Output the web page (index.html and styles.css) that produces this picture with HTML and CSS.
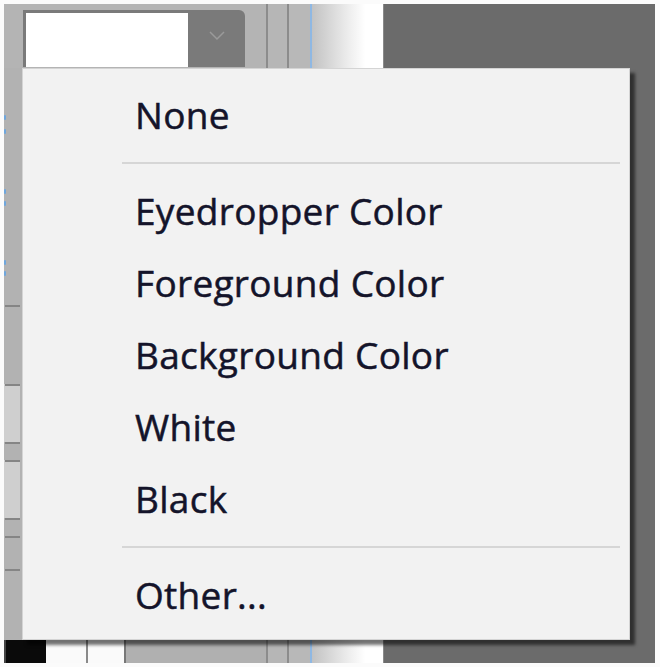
FILE: index.html
```html
<!DOCTYPE html>
<html>
<head>
<meta charset="utf-8">
<link rel="stylesheet" href="styles.css">
</head>
<body>
<div class="screen">
  <div class="cols">
    <div class="left">
      <div class="top">
        <div class="combo">
          <div class="combo-field"></div>
          <div class="combo-btn">
            <svg width="16" height="10" viewBox="0 0 16 10"><path d="M1 1 L8 8 L15 1" fill="none" stroke="#9a9a9a" stroke-width="1.5"/></svg>
          </div>
        </div>
      </div>
      <div class="mid">
        <div class="rail">
          <span class="dot d1"></span><span class="dot d2"></span>
          <span class="dot d3"></span><span class="dot d4"></span>
          <span class="dot d5"></span><span class="dot d6"></span>
          <div class="band b1"></div>
          <div class="band b2"></div>
          <span class="tick t1"></span><span class="tick t2"></span><span class="tick t3"></span>
          <span class="tick t4"></span><span class="tick t5"></span><span class="tick t6"></span><span class="tick t7"></span>
        </div>
      </div>
      <div class="bottom">
        <div class="cell black"></div>
        <div class="cell white1"></div>
        <div class="cell white2"></div>
        <div class="cell grey"></div>
      </div>
    </div>
    <div class="col c1"></div>
    <div class="col c2"></div>
    <div class="col fade"></div>
    <div class="col dark"></div>
  </div>

  <div class="menu">
    <div class="item">None</div>
    <div class="sep"></div>
    <div class="item">Eyedropper Color</div>
    <div class="item">Foreground Color</div>
    <div class="item">Background Color</div>
    <div class="item">White</div>
    <div class="item">Black</div>
    <div class="sep"></div>
    <div class="item">Other...</div>
  </div>
</div>
</body>
</html>
```

FILE: styles.css
```css
html, body {
  margin: 0;
  padding: 0;
  background: #fbfbfb;
}
.screen {
  position: relative;
  width: 660px;
  height: 667px;
  overflow: hidden;
  box-sizing: border-box;
  padding: 4px 5px 4px 4px;
  font-family: "Open Sans", "Noto Sans", sans-serif;
}
.cols {
  display: flex;
  height: 659px;
}
.left {
  width: 262px;
  display: flex;
  flex-direction: column;
  background: #b4b4b4;
}
.top {
  height: 64px;
  padding: 6px 0 0 19px;
  box-sizing: border-box;
}
.combo {
  display: flex;
  width: 222px;
  height: 57px;
  background: #7a7a7a;
  border-radius: 0 6px 0 0;
  box-sizing: border-box;
  padding: 3px 0 0 3px;
}
.combo-field {
  width: 162px;
  height: 54px;
  background: #ffffff;
}
.combo-btn {
  flex: 1;
  display: flex;
  align-items: center;
  justify-content: center;
  padding-bottom: 8px;
}
.mid {
  flex: 1;
  display: flex;
}
.rail {
  position: relative;
  width: 18px;
  background: #b2b2b2;
}
.dot {
  position: absolute;
  left: 0;
  width: 2px;
  height: 5px;
  background: #6ea6dc;
  border-radius: 1px;
}
.d1 { top: 47px; } .d2 { top: 61px; }
.d3 { top: 121px; } .d4 { top: 133px; }
.d5 { top: 192px; } .d6 { top: 203px; }
.band {
  position: absolute;
  left: 0;
  width: 16px;
  background: #cfcfcf;
}
.b1 { top: 316px; height: 58px; }
.b2 { top: 392px; height: 58px; }
.tick {
  position: absolute;
  left: 1px;
  width: 15px;
  height: 2px;
  background: #858585;
}
.t1 { top: 237px; } .t2 { top: 316px; } .t3 { top: 374px; }
.t4 { top: 392px; } .t5 { top: 450px; } .t6 { top: 468px; } .t7 { top: 501px; }
.bottom {
  height: 23px;
  display: flex;
  background: #fdfdfd;
}
.cell { height: 100%; }
.black {
  width: 40px;
  background: #0a0a0a;
  border-left: 2px solid #444;
}
.white1 {
  width: 40px;
  background: #fafafa;
  border-right: 2px solid #8a8a8a;
}
.white2 {
  width: 36px;
  background: #fafafa;
  border-right: 2px solid #777;
}
.grey {
  flex: 1;
  background: #b0b0b0;
}
.col { height: 100%; }
.c1 {
  width: 19px;
  background: #b6b6b6;
  border-left: 2px solid #8c8c8c;
}
.c2 {
  width: 21px;
  background: #b8b8b8;
  border-left: 2px solid #8c8c8c;
}
.fade {
  width: 71px;
  border-left: 2px solid #8fb8e3;
  background: linear-gradient(to right, #c2c2c2 0%, #ececec 50%, #ffffff 75%, #ffffff 100%);
}
.dark {
  flex: 1;
  background: #6b6b6b;
  border-left: 1px solid #8a8a8a;
}
.menu {
  position: absolute;
  left: 22px;
  top: 68px;
  width: 608px;
  height: 572px;
  box-sizing: border-box;
  background: #f2f2f2;
  border: 1px solid #d4d4d4;
  padding-top: 10px;
  box-shadow: 5px 5px 3px rgba(0, 0, 0, 0.55);
}
.item {
  height: 72px;
  line-height: 72px;
  padding-left: 112px;
  font-size: 37px;
  letter-spacing: 0.3px;
  color: #14142a;
  white-space: nowrap;
  -webkit-text-stroke: 0.5px #14142a;
}
.sep {
  height: 2px;
  margin: 11px 9px 11px 99px;
  background: #d6d6d6;
}
```
